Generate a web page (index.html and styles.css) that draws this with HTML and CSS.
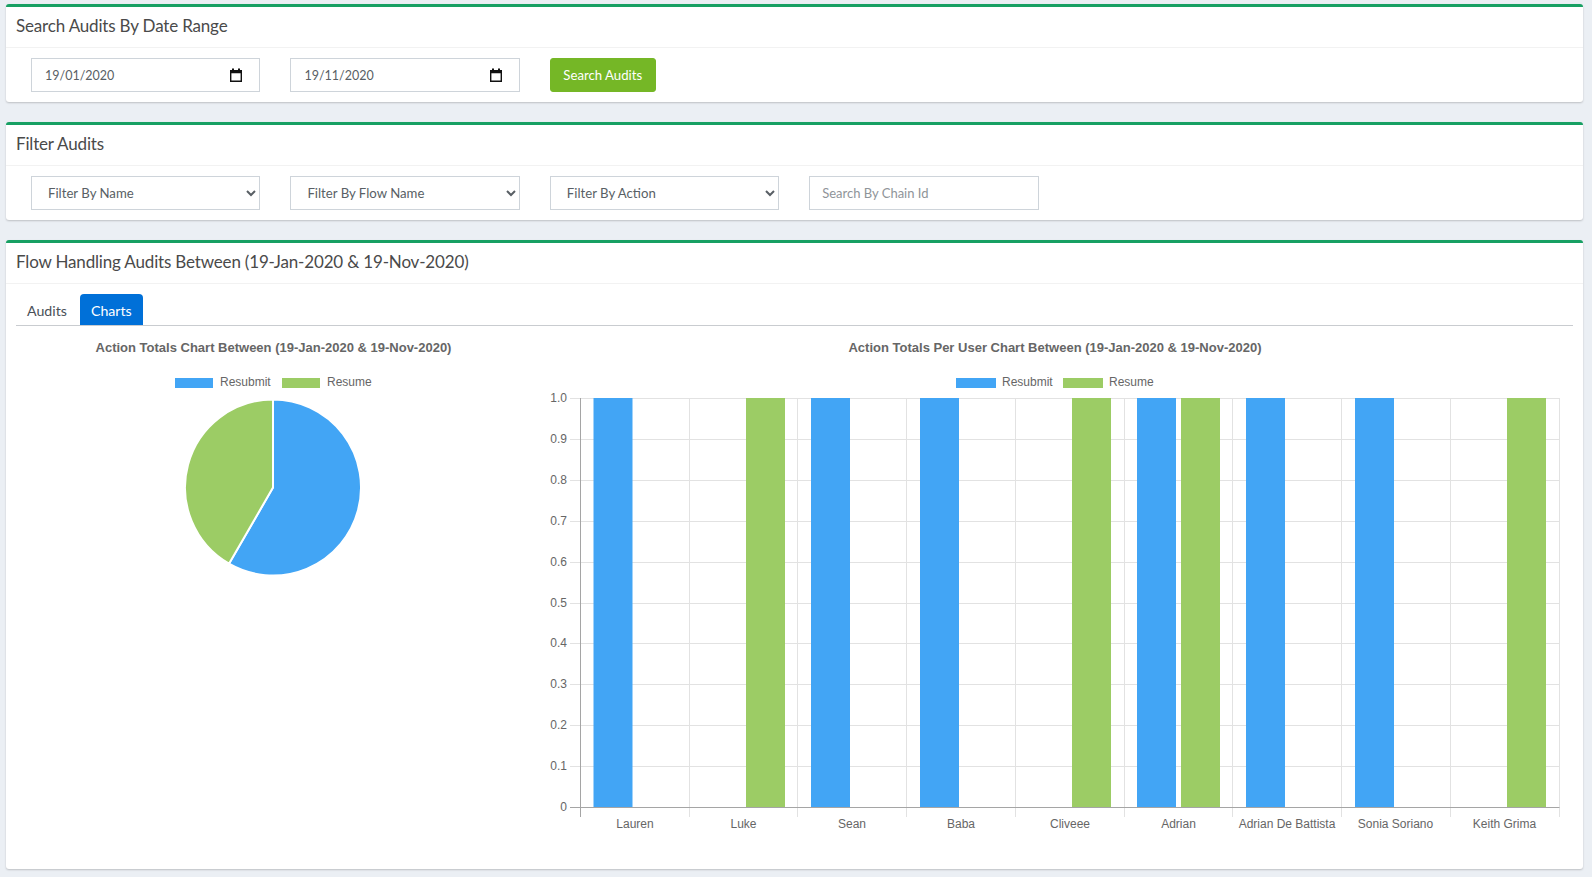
FILE: index.html
```html
<!DOCTYPE html>
<html lang="en-GB">
<head>
<meta charset="utf-8">
<title>Flow Handling Audits</title>
<link rel="stylesheet" href="styles.css">
</head>
<body>
<section class="card">
  <h2 class="card-header">Search Audits By Date Range</h2>
  <div class="card-body">
    <label class="field date-field"><input class="bare" type="text" value="19/01/2020" aria-label="From"><svg class="cal" viewBox="0 0 14 14"><path d="M1 2h12v12H1zM2.4 5.2v7.4h9.2V5.2z" fill-rule="evenodd"/><path d="M3 0.5h2v2H3zM9 0.5h2v2H9z"/></svg></label>
    <label class="field date-field"><input class="bare" type="text" value="19/11/2020" aria-label="To"><svg class="cal" viewBox="0 0 14 14"><path d="M1 2h12v12H1zM2.4 5.2v7.4h9.2V5.2z" fill-rule="evenodd"/><path d="M3 0.5h2v2H3zM9 0.5h2v2H9z"/></svg></label>
    <button class="btn" type="button">Search Audits</button>
  </div>
</section>

<section class="card">
  <h2 class="card-header">Filter Audits</h2>
  <div class="card-body">
    <select class="field"><option>Filter By Name</option></select>
    <select class="field"><option>Filter By Flow Name</option></select>
    <select class="field"><option>Filter By Action</option></select>
    <input class="field text-input" type="text" placeholder="Search By Chain Id">
  </div>
</section>

<section class="card card-main">
  <h2 class="card-header">Flow Handling Audits Between (19-Jan-2020 &amp; 19-Nov-2020)</h2>
  <div class="main-body">
    <nav class="tabs"><a class="tab">Audits</a><a class="tab active">Charts</a></nav>
    <div class="charts">
      <svg class="chart chart-pie" viewBox="0 0 515 260" width="515" height="260">
        <text class="chart-title" x="257.5" y="25.5" text-anchor="middle">Action Totals Chart Between (19-Jan-2020 &amp; 19-Nov-2020)</text>
        <rect class="blue" x="159" y="52" width="38" height="10"/>
        <text class="tick" x="204" y="60">Resubmit</text>
        <rect class="green" x="266" y="52" width="38" height="10"/>
        <text class="tick" x="311" y="60">Resume</text>
        <path class="blue slice" d="M257 161.5V73.5A88 88 0 1 1 213 237.7Z"/>
        <path class="green slice" d="M257 161.5L213 237.7A88 88 0 0 1 257 73.5Z"/>
      </svg>
      <svg class="chart chart-bars" viewBox="0 0 1036 510" width="1036" height="510">
        <text class="chart-title" x="518" y="25.5" text-anchor="middle">Action Totals Per User Chart Between (19-Jan-2020 &amp; 19-Nov-2020)</text>
        <rect class="blue" x="419" y="52" width="40" height="10"/>
        <text class="tick" x="465" y="60">Resubmit</text>
        <rect class="green" x="526" y="52" width="40" height="10"/>
        <text class="tick" x="572" y="60">Resume</text>
        <g class="grid">
          <path d="M33 72.5H1022.5M33 113.5H1022.5M33 154.5H1022.5M33 195.5H1022.5M33 236.5H1022.5M33 277.5H1022.5M33 317.5H1022.5M33 358.5H1022.5M33 399.5H1022.5M33 440.5H1022.5"/>
          <path d="M152.5 72V491M260.5 72V491M369.5 72V491M478.5 72V491M587.5 72V491M695.5 72V491M804.5 72V491M913.5 72V491M1022.5 72V491"/>
        </g>
        <rect class="blue" x="56.5" y="72" width="39" height="409"/>
        <rect class="green" x="209" y="72" width="39" height="409"/>
        <rect class="blue" x="274" y="72" width="39" height="409"/>
        <rect class="blue" x="383" y="72" width="39" height="409"/>
        <rect class="green" x="535" y="72" width="39" height="409"/>
        <rect class="blue" x="600" y="72" width="39" height="409"/>
        <rect class="green" x="644" y="72" width="39" height="409"/>
        <rect class="blue" x="709" y="72" width="39" height="409"/>
        <rect class="blue" x="818" y="72" width="39" height="409"/>
        <rect class="green" x="970" y="72" width="39" height="409"/>
        <path class="axis" d="M43.5 72V491M33 481.5H1022.5"/>
        <g class="tick" text-anchor="end">
          <text x="30" y="76">1.0</text><text x="30" y="117">0.9</text><text x="30" y="158">0.8</text><text x="30" y="199">0.7</text><text x="30" y="240">0.6</text><text x="30" y="281">0.5</text><text x="30" y="321">0.4</text><text x="30" y="362">0.3</text><text x="30" y="403">0.2</text><text x="30" y="444">0.1</text><text x="30" y="485">0</text>
        </g>
        <g class="tick" text-anchor="middle">
          <text x="98" y="502">Lauren</text><text x="206.5" y="502">Luke</text><text x="315" y="502">Sean</text><text x="424" y="502">Baba</text><text x="533" y="502">Cliveee</text><text x="641.5" y="502">Adrian</text><text x="750" y="502">Adrian De Battista</text><text x="858.5" y="502">Sonia Soriano</text><text x="967.5" y="502">Keith Grima</text>
        </g>
      </svg>
    </div>
  </div>
</section>
</body>
</html>
```

FILE: styles.css
```css
* { box-sizing: border-box; }
html, body { margin: 0; }
body {
  background: #ebeff4;
  padding: 4px 9px 7px 6px;
  font-family: Lato, "Open Sans", sans-serif;
  color: #495057;
}
.card {
  background: #fff;
  border-top: 3px solid #17a063;
  border-radius: 3px;
  box-shadow: 0 1px 2px rgba(0, 0, 0, .2);
  margin-bottom: 20px;
}
.card-main { margin-bottom: 0; }
.card-header {
  margin: 0;
  height: 41px;
  padding: 8px 10px 0;
  font-size: 17px;
  font-weight: 400;
  letter-spacing: -.17px;
  line-height: 22px;
  color: #4a4a4a;
  border-bottom: 1px solid #f2f2f2;
}
.card-body {
  display: flex;
  gap: 30px;
  padding: 10px 25px;
  height: 54px;
}
.field {
  width: 229.4px;
  height: 34px;
  border: 1px solid #ced4da;
  border-radius: 0;
  background: #fff;
  color: #595f65;
  font: 13.2px Lato, "Open Sans", sans-serif;
  outline: 0;
}
select.field { padding: 0 12px; }
.date-field {
  display: flex;
  align-items: center;
  padding: 0 16px 0 13px;
}
.bare {
  flex: 1;
  min-width: 0;
  border: 0;
  padding: 0;
  outline: 0;
  font: 12.5px Lato, "Open Sans", sans-serif;
  color: inherit;
}
.cal { width: 14px; height: 14px; flex: none; fill: #111; }
.text-input { padding: 0 12px; font-size: 13px; }
.text-input::placeholder { color: #8f9499; opacity: 1; }
.btn {
  width: 106px;
  height: 34px;
  border: 1px solid #75b726;
  border-radius: 3px;
  background: #75b726;
  color: #fff;
  font: 13.2px Lato, "Open Sans", sans-serif;
}
.main-body { padding: 10px 10px 0; height: 585px; }
.tabs {
  display: flex;
  align-items: flex-end;
  gap: 2px;
  height: 32px;
  border-bottom: 1px solid #c9ccd0;
}
.tab {
  display: block;
  height: 31px;
  padding: 7px 11px 0;
  font-size: 14.2px;
  line-height: 20px;
  color: #495057;
}
.tab.active {
  background: #0070d8;
  color: #fff;
  border-radius: 4px 4px 0 0;
}
.charts { display: flex; gap: 6px; }
.chart { display: block; flex: none; }
.chart-title { font: bold 13px "Liberation Sans", Arial, sans-serif; fill: #666; }
.tick, .tick text { font: 12px "Liberation Sans", Arial, sans-serif; fill: #666; }
.blue { fill: #42a5f5; }
.green { fill: #9ccc65; }
.slice { stroke: #fff; stroke-width: 2; }
.grid path { fill: none; stroke: #e2e2e2; stroke-width: 1; }
.axis { fill: none; stroke: #a5a5a5; stroke-width: 1; }
```
